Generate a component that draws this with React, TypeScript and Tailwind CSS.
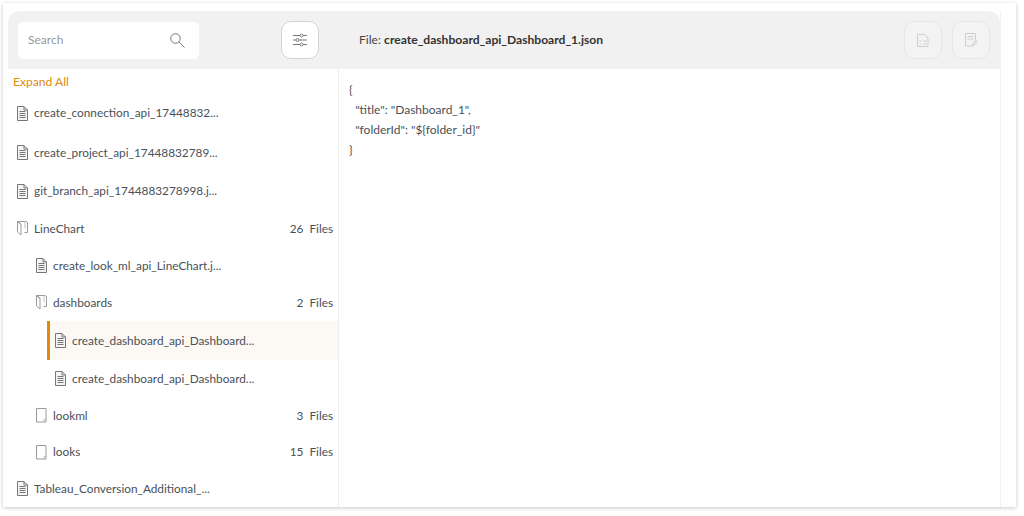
type Row = {
  name: string;
  kind: "file" | "open" | "closed";
  indent: 0 | 1 | 2;
  count?: string;
  height: string;
  selected?: boolean;
};

const rows: Row[] = [
  { name: "create_connection_api_17448832...", kind: "file", indent: 0, height: "h-[40px]" },
  { name: "create_project_api_17448832789...", kind: "file", indent: 0, height: "h-[39px]" },
  { name: "git_branch_api_1744883278998.j...", kind: "file", indent: 0, height: "h-[38px]" },
  { name: "LineChart", kind: "open", indent: 0, count: "26", height: "h-[37px]" },
  { name: "create_look_ml_api_LineChart.j...", kind: "file", indent: 1, height: "h-[37px]" },
  { name: "dashboards", kind: "open", indent: 1, count: "2", height: "h-[37px]" },
  { name: "create_dashboard_api_Dashboard...", kind: "file", indent: 2, height: "h-[39px]", selected: true },
  { name: "create_dashboard_api_Dashboard...", kind: "file", indent: 2, height: "h-[37px]" },
  { name: "lookml", kind: "closed", indent: 1, count: "3", height: "h-[37px]" },
  { name: "looks", kind: "closed", indent: 1, count: "15", height: "h-[36px]" },
  { name: "Tableau_Conversion_Additional_...", kind: "file", indent: 0, height: "h-[37px]" },
];

function FileIcon() {
  return (
    <svg width="11" height="15" viewBox="0 0 11 15" fill="none" stroke="#777" strokeWidth="1" className="shrink-0">
      <path d="M.5.500h6.500l3.500 3.500v10.500h-10z" fill="#f4f4f4" />
      <path d="M7 .5v3.500h3.500M2.500 5.500h6M2.500 7.500h6M2.500 9.500h6M2.500 11.500h6" />
    </svg>
  );
}

function OpenFolderIcon() {
  return (
    <svg width="11" height="15" viewBox="0 0 11 15" fill="none" stroke="#9a9a9a" strokeWidth="1" className="shrink-0">
      <path d="M.5.500h8.500l1.500 1v10h-3" />
      <path d="M.5.500v10.500l3.500 3v-11zM.5.500l3.500 3" />
      <path d="M8 .5v7" stroke="#c4c4c4" />
    </svg>
  );
}

function ClosedFolderIcon() {
  return (
    <svg width="11" height="15" viewBox="0 0 11 15" fill="none" stroke="#9a9a9a" strokeWidth="1" className="shrink-0">
      <path d="M.5.500h9.500v13.500h-9.500z" />
      <path d="M8 14v-2.500h2" stroke="#bbb" />
    </svg>
  );
}

function TreeRow({ row }: { row: Row }) {
  const indent = row.indent === 0 ? "pl-[9px]" : row.indent === 1 ? "pl-[28px]" : "pl-[39px]";
  return (
    <div className={`${row.height} ${indent} flex shrink-0 items-center pr-[5px]`}>
      <div
        className={`flex h-full min-w-0 flex-1 items-center gap-[6px] ${
          row.selected ? "-mr-[5px] border-l-[3px] border-[#e08a0c] bg-[#fcf9f5] pl-[5px]" : row.indent === 2 ? "pl-[8px]" : ""
        }`}
      >
        {row.kind === "file" && <FileIcon />}
        {row.kind === "open" && <OpenFolderIcon />}
        {row.kind === "closed" && <ClosedFolderIcon />}
        <span className="truncate text-[11.800px] text-[#4a5058]">{row.name}</span>
        {row.count && (
          <span className="ml-auto whitespace-pre text-[11.800px] text-[#4a5058]">{row.count}  Files</span>
        )}
      </div>
    </div>
  );
}

export default function App() {
  return (
    <div className="h-[516px] w-[1024px] overflow-hidden bg-white font-['Lato',sans-serif]">
      <div className="ml-[3px] mt-[3px] h-[504px] w-[1013px] bg-white pl-[5px] pr-[15px] pt-[8px] shadow-[0_1px_4px_rgba(0,0,0,0.22)]">
        <div className="flex h-[496px] flex-col border-r border-[#f0f0f0]">
          <header className="flex h-[58px] shrink-0 items-center rounded-t-[12px] bg-[#f1f1f1] pl-[10px] pr-[10px]">
            <div className="flex h-[37px] w-[181px] items-center justify-between rounded-[5px] bg-white pl-[10px] pr-[14px]">
              <span className="text-[12px] text-[#9a9a9a]">Search</span>
              <svg width="15" height="15" viewBox="0 0 15 15" fill="none" stroke="#777" strokeWidth="1">
                <circle cx="5.500" cy="5.500" r="4.800" />
                <path d="M9 9l5.500 5.500" />
              </svg>
            </div>
            <button className="ml-[82px] flex h-[38px] w-[38px] items-center justify-center rounded-[10px] border border-[#d4d4d4] bg-white">
              <svg width="14" height="14" viewBox="0 0 14 14" fill="none" stroke="#777" strokeWidth="1">
                <path d="M0 2.500h7M10 2.500h4M0 7h3M6 7h8M0 11.500h7M10 11.500h4" />
                <circle cx="8.500" cy="2.500" r="1.500" />
                <circle cx="4.500" cy="7" r="1.500" />
                <circle cx="8.500" cy="11.500" r="1.500" />
              </svg>
            </button>
            <div className="ml-[40px] flex-1 text-[12.100px] text-[#444]">
              File: <span className="font-bold text-[#333]">create_dashboard_api_Dashboard_1.json</span>
            </div>
            <button className="flex h-[38px] w-[38px] items-center justify-center rounded-[10px] border border-[#e6e6e6] bg-[#f3f3f3]">
              <svg width="12" height="13" viewBox="0 0 12 13" fill="none" stroke="#cfcfcf">
                <path d="M.5.500h7l3.500 3.500v8.500h-10.500zM2.500 7h2M6.500 7h3M2.500 10h2M6.500 10h3" />
              </svg>
            </button>
            <button className="ml-[10px] flex h-[38px] w-[38px] items-center justify-center rounded-[10px] border border-[#e6e6e6] bg-[#f3f3f3]">
              <svg width="13" height="14" viewBox="0 0 13 14" fill="none" stroke="#cfcfcf">
                <path d="M.5.500h10v7l-4 5.500h-6zM2.500 3.500h6M2.500 6h6M7 12l4.500-4.500 1 1-4.500 4.500z" />
              </svg>
            </button>
          </header>
          <div className="flex min-h-0 flex-1">
            <aside className="flex w-[331px] shrink-0 flex-col border-r border-[#eeeeee]">
              <div className="h-[24px] shrink-0 pl-[5px] pt-[5px] text-[12.100px] leading-[16px] text-[#e08a0c]">Expand All</div>
              {rows.map((row, i) => (
                <TreeRow key={i} row={row} />
              ))}
            </aside>
            <pre className="flex-1 pl-[10px] pt-[11px] font-['Lato',sans-serif] text-[12px] leading-[20px] text-[#4a5058]">
              {`{\n  "title": "Dashboard_1",\n  "folderId": "\${folder_id}"\n}`}
            </pre>
          </div>
        </div>
      </div>
    </div>
  );
}
